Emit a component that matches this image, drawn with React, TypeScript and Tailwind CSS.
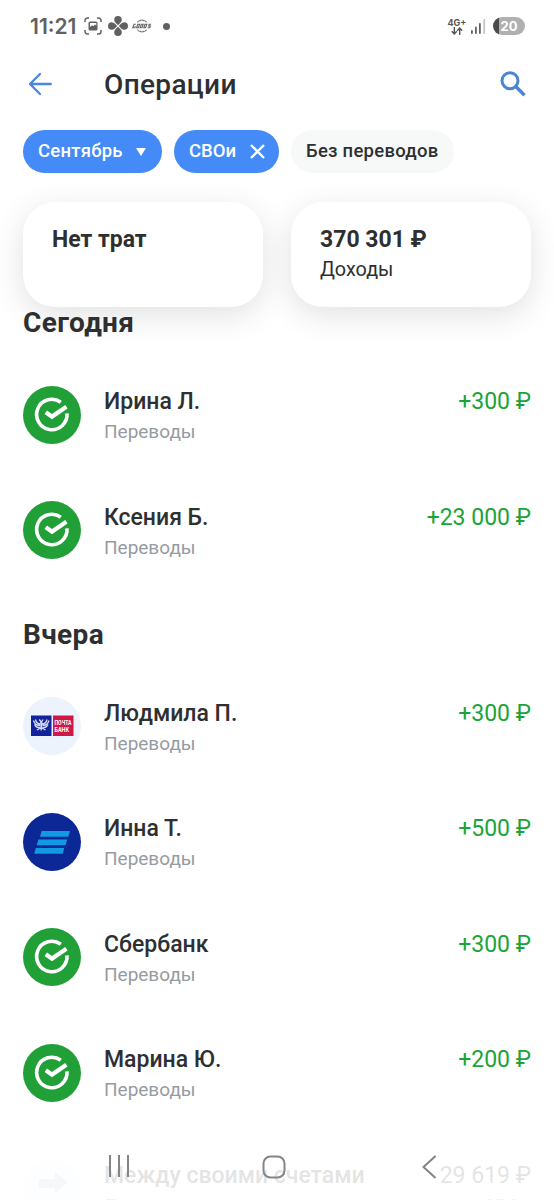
import type { ReactNode } from "react";

type Bank = "sber" | "pochta" | "blue" | "own";

interface Operation {
    bank: Bank;
    name: string;
    category: string;
    amount: string;
    income?: boolean;
    note?: string;
}

interface Group {
    title: string;
    items: Operation[];
}

const groups: Group[] = [
    {
        title: "Сегодня",
        items: [
            { bank: "sber", name: "Ирина Л.", category: "Переводы", amount: "+300 ₽", income: true },
            { bank: "sber", name: "Ксения Б.", category: "Переводы", amount: "+23 000 ₽", income: true },
        ],
    },
    {
        title: "Вчера",
        items: [
            { bank: "pochta", name: "Людмила П.", category: "Переводы", amount: "+300 ₽", income: true },
            { bank: "blue", name: "Инна Т.", category: "Переводы", amount: "+500 ₽", income: true },
            { bank: "sber", name: "Сбербанк", category: "Переводы", amount: "+300 ₽", income: true },
            { bank: "sber", name: "Марина Ю.", category: "Переводы", amount: "+200 ₽", income: true },
            { bank: "own", name: "Между своими счетами", category: "Переводы", amount: "29 619 ₽", note: "СВОи" },
        ],
    },
];

function SberLogo() {
    return (
        <svg viewBox="0 0 58 58" className="size-[58px] shrink-0">
            <circle cx="29" cy="29" r="29" fill="#21a038" />
            <g fill="none" stroke="#fff" strokeWidth="3.6">
                <path d="M37.8 16.2A15.2 15.2 0 1 0 44 27.4" />
                <path d="M22.8 26.2L29 30.6L43.4 20.8" strokeWidth="4.2" />
            </g>
        </svg>
    );
}

function PochtaLogo() {
    return (
        <svg viewBox="0 0 58 58" className="size-[58px] shrink-0">
            <circle cx="29" cy="29" r="29" fill="#edf3fc" />
            <rect x="8" y="18.5" width="20.5" height="20.5" fill="#13239b" />
            <rect x="30" y="18.5" width="20.5" height="20.5" fill="#cf1748" />
            <g fill="none" stroke="#d5dcf5" strokeWidth="1.3">
                <path d="M10.5 23.5C11.5 27 14 28.5 17 28.5M12.5 22.5C13 25 14.5 27 17.5 27M11.5 27.5C13 30.5 15 31 17 30.5" />
                <path d="M26 23.5C25 27 22.5 28.5 19.5 28.5M24 22.5C23.5 25 22 27 19 27M25 27.5C23.5 30.5 21.5 31 19.5 30.5" />
                <path d="M16.3 22.5L17.8 24.5L18.2 33.5L18.8 24.5L20.2 22.5M14 33L18.2 30.5L22.5 33" />
            </g>
            <g fill="#fff" fontFamily="Roboto, sans-serif" fontWeight="700" fontSize="7">
                <text x="31.5" y="27.7" textLength="17" lengthAdjust="spacingAndGlyphs">ПОЧТА</text>
                <text x="31.5" y="35.2" textLength="14.5" lengthAdjust="spacingAndGlyphs">БАНК</text>
            </g>
        </svg>
    );
}

function BlueLogo() {
    return (
        <svg viewBox="0 0 58 58" className="size-[58px] shrink-0">
            <circle cx="29" cy="29" r="29" fill="#0b2896" />
            <g fill="#1299e5">
                <path d="M18.6 18H47L45.3 23.8H17Z" />
                <path d="M15.5 26.4H44.2L42.5 32.2H13.6Z" />
                <path d="M12.8 34.9H41.3L39.7 40.7H11.2Z" />
            </g>
        </svg>
    );
}

function OwnLogo() {
    return (
        <svg viewBox="0 0 58 58" className="size-[58px] shrink-0">
            <circle cx="29" cy="29" r="29" fill="#e6f2fc" />
            <path d="M16 20h16v-7l13 10.500-13 10.500v-5H16z" fill="#b9c1c9" />
        </svg>
    );
}

const logos: Record<Bank, ReactNode> = {
    sber: <SberLogo />,
    pochta: <PochtaLogo />,
    blue: <BlueLogo />,
    own: <OwnLogo />,
};

function StatusBar() {
    return (
        <div className="flex h-[52px] items-center justify-between pr-[29px] pl-[30px] text-[#616161]">
            <div className="flex items-center">
                <span className="w-[47px] text-[21px] leading-none font-semibold tracking-[0px] whitespace-nowrap [font-family:Inter,sans-serif]">
                    11:21
                </span>
                <svg viewBox="0 0 18 18" className="ml-[7px] size-[18px]" fill="none" stroke="currentColor" strokeWidth="1.5">
                    <path d="M1 5V3.5A2.5 2.5 0 0 1 3.5 1H5M13 1h1.5A2.5 2.5 0 0 1 17 3.5V5M17 13v1.5a2.5 2.5 0 0 1-2.5 2.5H13M5 17H3.5A2.5 2.5 0 0 1 1 14.5V13" />
                    <path fillRule="evenodd" fill="currentColor" stroke="none" d="M6 4.500h6A1.500 1.500 0 0 1 13.500 6v6a1.500 1.500 0 0 1-1.500 1.500H6A1.500 1.500 0 0 1 4.500 12V6A1.500 1.500 0 0 1 6 4.500ZM6 10L8 8.200L9.300 9.300L11 7.500L12.300 8.500V6H6Z" />
                </svg>
                <svg viewBox="0 0 20 20" className="ml-[6px] size-[20px]" fill="currentColor">
                    <path d="M10 0a3.800 3.800 0 0 1 3.800 3.800C13.800 6.300 11.500 7.500 10 9.200 8.500 7.500 6.200 6.300 6.200 3.800A3.800 3.800 0 0 1 10 0Z" />
                    <path d="M10 20a3.800 3.800 0 0 0 3.800-3.800C13.800 13.700 11.500 12.500 10 10.800 8.500 12.500 6.200 13.700 6.200 16.200A3.800 3.800 0 0 0 10 20Z" />
                    <path d="M0 10a3.800 3.800 0 0 1 3.800-3.800C6.300 6.200 7.500 8.500 9.200 10 7.500 11.500 6.300 13.800 3.800 13.800A3.800 3.800 0 0 1 0 10Z" />
                    <path d="M20 10a3.800 3.800 0 0 0-3.800-3.800C13.700 6.200 12.500 8.500 10.800 10c1.700 1.500 2.900 3.800 5.400 3.800A3.800 3.800 0 0 0 20 10Z" />
                </svg>
                <svg viewBox="0 0 20 14" className="ml-[4px] h-[14px] w-[20px]" fill="none" stroke="currentColor" strokeWidth="1">
                    <path d="M5 3.3A8 8 0 0 1 15 3.3M5 10.7A8 8 0 0 0 15 10.7" strokeDasharray="2 .8" />
                    <path d="M6.5 12.3A8 8 0 0 0 13.5 12.3M6.5 1.7A8 8 0 0 1 13.5 1.7" strokeWidth=".6" />
                    <path d="M3.800 5.200H2L.8 8.800H2.800L3.300 7.200M5.800 5.200L4.600 8.800H6.400L7.600 5.200ZM9.400 5.200L8.200 8.800H10L11.200 5.200ZM13 5.200L11.800 8.800H13.600L14.800 5.200ZM19.200 5.200H17.200L16.700 7H18.400L17.800 8.800H15.600" strokeWidth="1.100" />
                </svg>
                <span className="ml-[11px] size-[7px] rounded-full bg-current" />
            </div>
            <div className="flex items-center">
                <div className="flex w-[18px] flex-col items-center text-[#555]">
                    <span className="text-[9px] leading-[9px] font-bold [font-family:Inter,sans-serif]">4G+</span>
                    <svg viewBox="0 0 12 8" className="h-[8px] w-[12px]" fill="none" stroke="currentColor" strokeWidth="1.4">
                        <path d="M3.3 0V7M.8 4.3L3.3 7L5.8 4.3M8.7 8V1M6.2 3.7L8.7 1L11.2 3.7" />
                    </svg>
                </div>
                <svg viewBox="0 0 15 15" className="ml-[5px] size-[15px]" fill="currentColor">
                    <rect x="0" y="11" width="1.8" height="4" rx=".9" />
                    <rect x="4" y="7.5" width="1.8" height="7.5" rx=".9" />
                    <rect x="8" y="4" width="1.8" height="11" rx=".9" />
                    <rect x="12.3" y="0" width="1.8" height="15" rx=".9" fill="#c4c4c4" />
                </svg>
                <div className="ml-[7px] flex h-[18px] w-[32px] items-center justify-center rounded-full bg-linear-to-r from-[#4a4a4a] from-19% to-[#b0b0b0] to-19% text-[13px] leading-none font-bold text-white [font-family:Inter,sans-serif]">
                    20
                </div>
            </div>
        </div>
    );
}

function Header() {
    return (
        <header className="flex h-[64px] items-center px-[28px]">
            <svg viewBox="0 0 24 24" className="size-[24px]" fill="none" stroke="#4a86dc" strokeWidth="2.3" strokeLinecap="round" strokeLinejoin="round">
                <path d="M22.800 12H2M12 2L2 12L12 22" />
            </svg>
            <h1 className="ml-[52px] flex-1 pt-px text-[28px] leading-none font-medium tracking-[0.35px]">Операции</h1>
            <svg viewBox="0 0 26 26" className="size-[26px]" fill="none" stroke="#4a84d2" strokeWidth="3">
                <circle cx="10" cy="9.7" r="8" />
                <path d="M15.8 15.500L24.500 24.200" strokeWidth="3.4" />
            </svg>
        </header>
    );
}

function Filters() {
    return (
        <div className="flex h-[86px] items-start gap-[12px] px-[23px] pt-[14px] text-[18.5px] font-medium tracking-[0.25px]">
            <div className="flex h-[43px] w-[139px] items-center rounded-full bg-[#448bf8] pl-[15px] text-white">
                <span className="w-[85px] pt-px whitespace-nowrap">Сентябрь</span>
                <svg viewBox="0 0 10 8" className="mt-px ml-[13px] h-[8px] w-[10px]" fill="#fff">
                    <path d="M0 0H10L5 8Z" />
                </svg>
            </div>
            <div className="flex h-[43px] w-[105px] items-center rounded-full bg-[#448bf8] pl-[15px] text-white">
                <span className="w-[48px] pt-px tracking-[0px] whitespace-nowrap">СВОи</span>
                <svg viewBox="0 0 15 15" className="ml-[13px] size-[15px]" fill="none" stroke="#fff" strokeWidth="2.3">
                    <path d="M1 1L14 14M14 1L1 14" />
                </svg>
            </div>
            <div className="flex h-[43px] w-[163px] items-center rounded-full bg-[#f7f9f9] pl-[15px]">
                <span className="pt-px whitespace-nowrap">Без переводов</span>
            </div>
        </div>
    );
}

function SummaryCard({ title, label }: { title: string; label?: string }) {
    return (
        <div className="h-[105px] flex-1 rounded-[32px] bg-white px-[29px] pt-[24px] shadow-[0_8px_32px_rgba(0,0,0,0.12)]">
            <div className="text-[23px] leading-[28px] font-bold">{title}</div>
            {label && <div className="mt-[4px] text-[19.8px] leading-[24px]">{label}</div>}
        </div>
    );
}

function OperationRow({ op }: { op: Operation }) {
    return (
        <div className="flex h-[115.4px] items-center">
            {logos[op.bank]}
            <div className="ml-[23px] flex-1 pt-[3px]">
                <div className="text-[23px] leading-[28px] font-medium">{op.name}</div>
                <div className="mt-[4px] text-[19px] leading-[24px] text-[#969ba1]">{op.category}</div>
            </div>
            <div className="pt-[3px] text-right">
                <div className={op.income ? "text-[23px] leading-[28px] text-[#1aa537]" : "text-[23px] leading-[28px]"}>
                    {op.amount}
                </div>
                <div className="mt-[4px] h-[24px] text-[19px] leading-[24px] text-[#969ba1]">{op.note}</div>
            </div>
        </div>
    );
}

function NavBar() {
    return (
        <nav className="absolute inset-x-0 bottom-0 flex h-[74px] items-start bg-white/87 pt-[29px]">
            <svg viewBox="0 0 22 22" className="ml-[108px] size-[22px]" stroke="#858585" strokeWidth="2">
                <path d="M2 0V22M11 0V22M20 0V22" />
            </svg>
            <svg viewBox="0 0 24 24" className="ml-[132px] size-[24px]" fill="none" stroke="#858585" strokeWidth="2">
                <rect x="1.5" y="1.5" width="21" height="21" rx="7" />
            </svg>
            <svg viewBox="0 0 14 24" className="ml-[136px] h-[24px] w-[14px]" fill="none" stroke="#858585" strokeWidth="2">
                <path d="M13.5 1L1.5 12L13.5 23" />
            </svg>
        </nav>
    );
}

export default function App() {
    return (
        <div className="relative h-[1200px] w-[554px] overflow-hidden bg-white text-[#2e2f31] [font-family:Roboto,sans-serif]">
            <StatusBar />
            <Header />
            <Filters />
            <div className="flex gap-[28px] px-[23px]">
                <SummaryCard title="Нет трат" />
                <SummaryCard title="370 301 ₽" label="Доходы" />
            </div>
            <main className="relative -mt-[31px] px-[23px]">
                {groups.map((group) => (
                    <section key={group.title}>
                        <h2 className="flex h-[81px] items-center pt-[13px] text-[28px] leading-none font-bold tracking-[0.35px]">{group.title}</h2>
                        {group.items.map((op) => (
                            <OperationRow key={op.name} op={op} />
                        ))}
                    </section>
                ))}
            </main>
            <NavBar />
        </div>
    );
}
